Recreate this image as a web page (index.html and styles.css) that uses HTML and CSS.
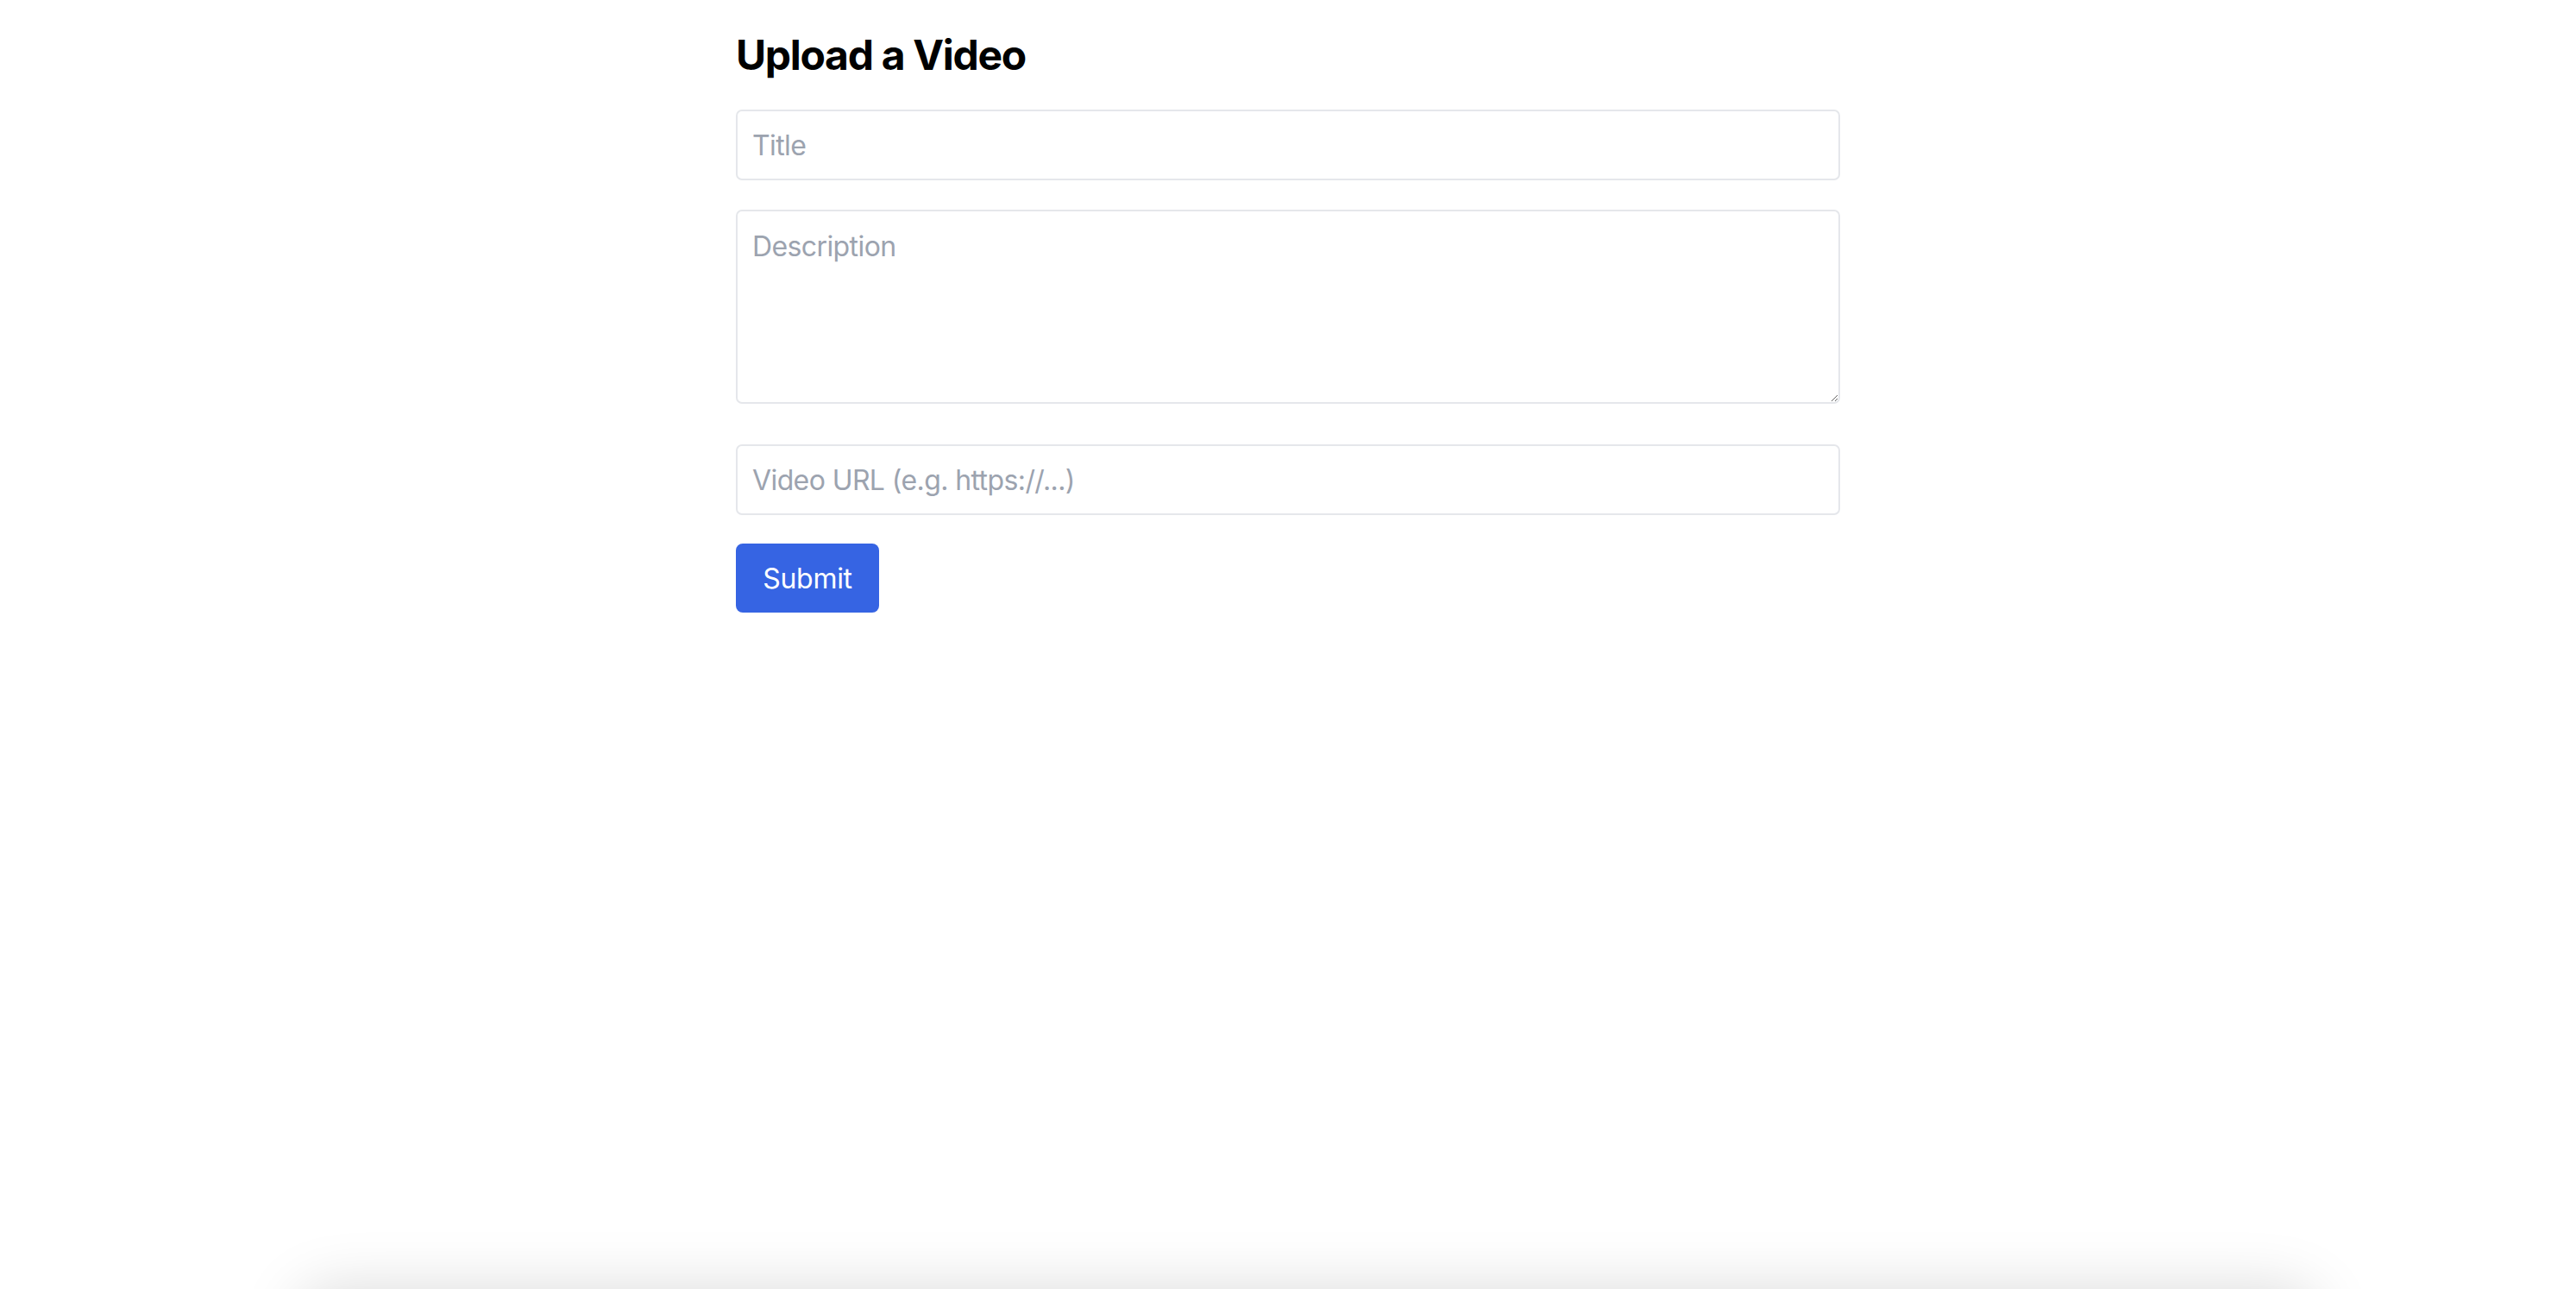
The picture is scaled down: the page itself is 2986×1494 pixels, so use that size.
FILE: index.html
```html
<!DOCTYPE html>
<html lang="en">
<head>
<meta charset="utf-8">
<title>Upload a Video</title>
<link rel="stylesheet" href="styles.css">
</head>
<body>
<main class="page">
  <h1 class="heading">Upload a Video</h1>
  <form class="form">
    <input class="field field-title" type="text" placeholder="Title">
    <div class="area-wrap"><textarea class="field field-area" placeholder="Description"></textarea></div>
    <input class="field field-url" type="text" placeholder="Video URL (e.g. https://...)">
    <div class="actions"><button class="submit" type="button">Submit</button></div>
  </form>
</main>
<div class="bottom-shadow"></div>
</body>
</html>
```

FILE: styles.css
```css
html, body {
  margin: 0;
  padding: 0;
  background: #ffffff;
  height: 100%;
  overflow: hidden;
}

body {
  font-family: Inter, "Noto Sans", "Liberation Sans", sans-serif;
  color: #000;
}

.page {
  width: 1280px;
  margin: 0 auto;
  padding-top: 32px;
}

.heading {
  margin: 0 0 31px 0;
  font-size: 48px;
  line-height: 64px;
  font-weight: 700;
  letter-spacing: -1.3px;
}

.form {
  display: flex;
  flex-direction: column;
}

.field {
  box-sizing: border-box;
  width: 100%;
  border: 2px solid #e5e7eb;
  border-radius: 7px;
  padding: 0 17px;
  font-family: inherit;
  font-size: 32px;
  letter-spacing: -0.6px;
  color: #111827;
  background: #fff;
  outline: none;
  margin: 0;
}

.field::placeholder {
  color: #9ca3af;
}

.field-title,
.field-url {
  height: 82px;
  line-height: 48px;
}

.area-wrap {
  margin-top: 34px;
  display: flex;
}

.field-area {
  height: 225px;
  padding-top: 17px;
  padding-bottom: 16px;
  line-height: 48px;
  resize: vertical;
  display: block;
}

.field-url {
  margin-top: 47px;
}

.actions {
  margin-top: 33px;
  display: flex;
}

.submit {
  height: 80px;
  width: 166px;
  border: none;
  border-radius: 8px;
  background: #3664e3;
  color: #ffffff;
  font-family: inherit;
  font-size: 32px;
  font-weight: 400;
  letter-spacing: -0.3px;
  padding: 0;
}

.bottom-shadow {
  position: fixed;
  left: 345px;
  right: 300px;
  top: 100%;
  height: 200px;
  box-shadow: 0 0 70px rgba(0, 0, 0, 0.15);
  border-radius: 40px;
}
```
